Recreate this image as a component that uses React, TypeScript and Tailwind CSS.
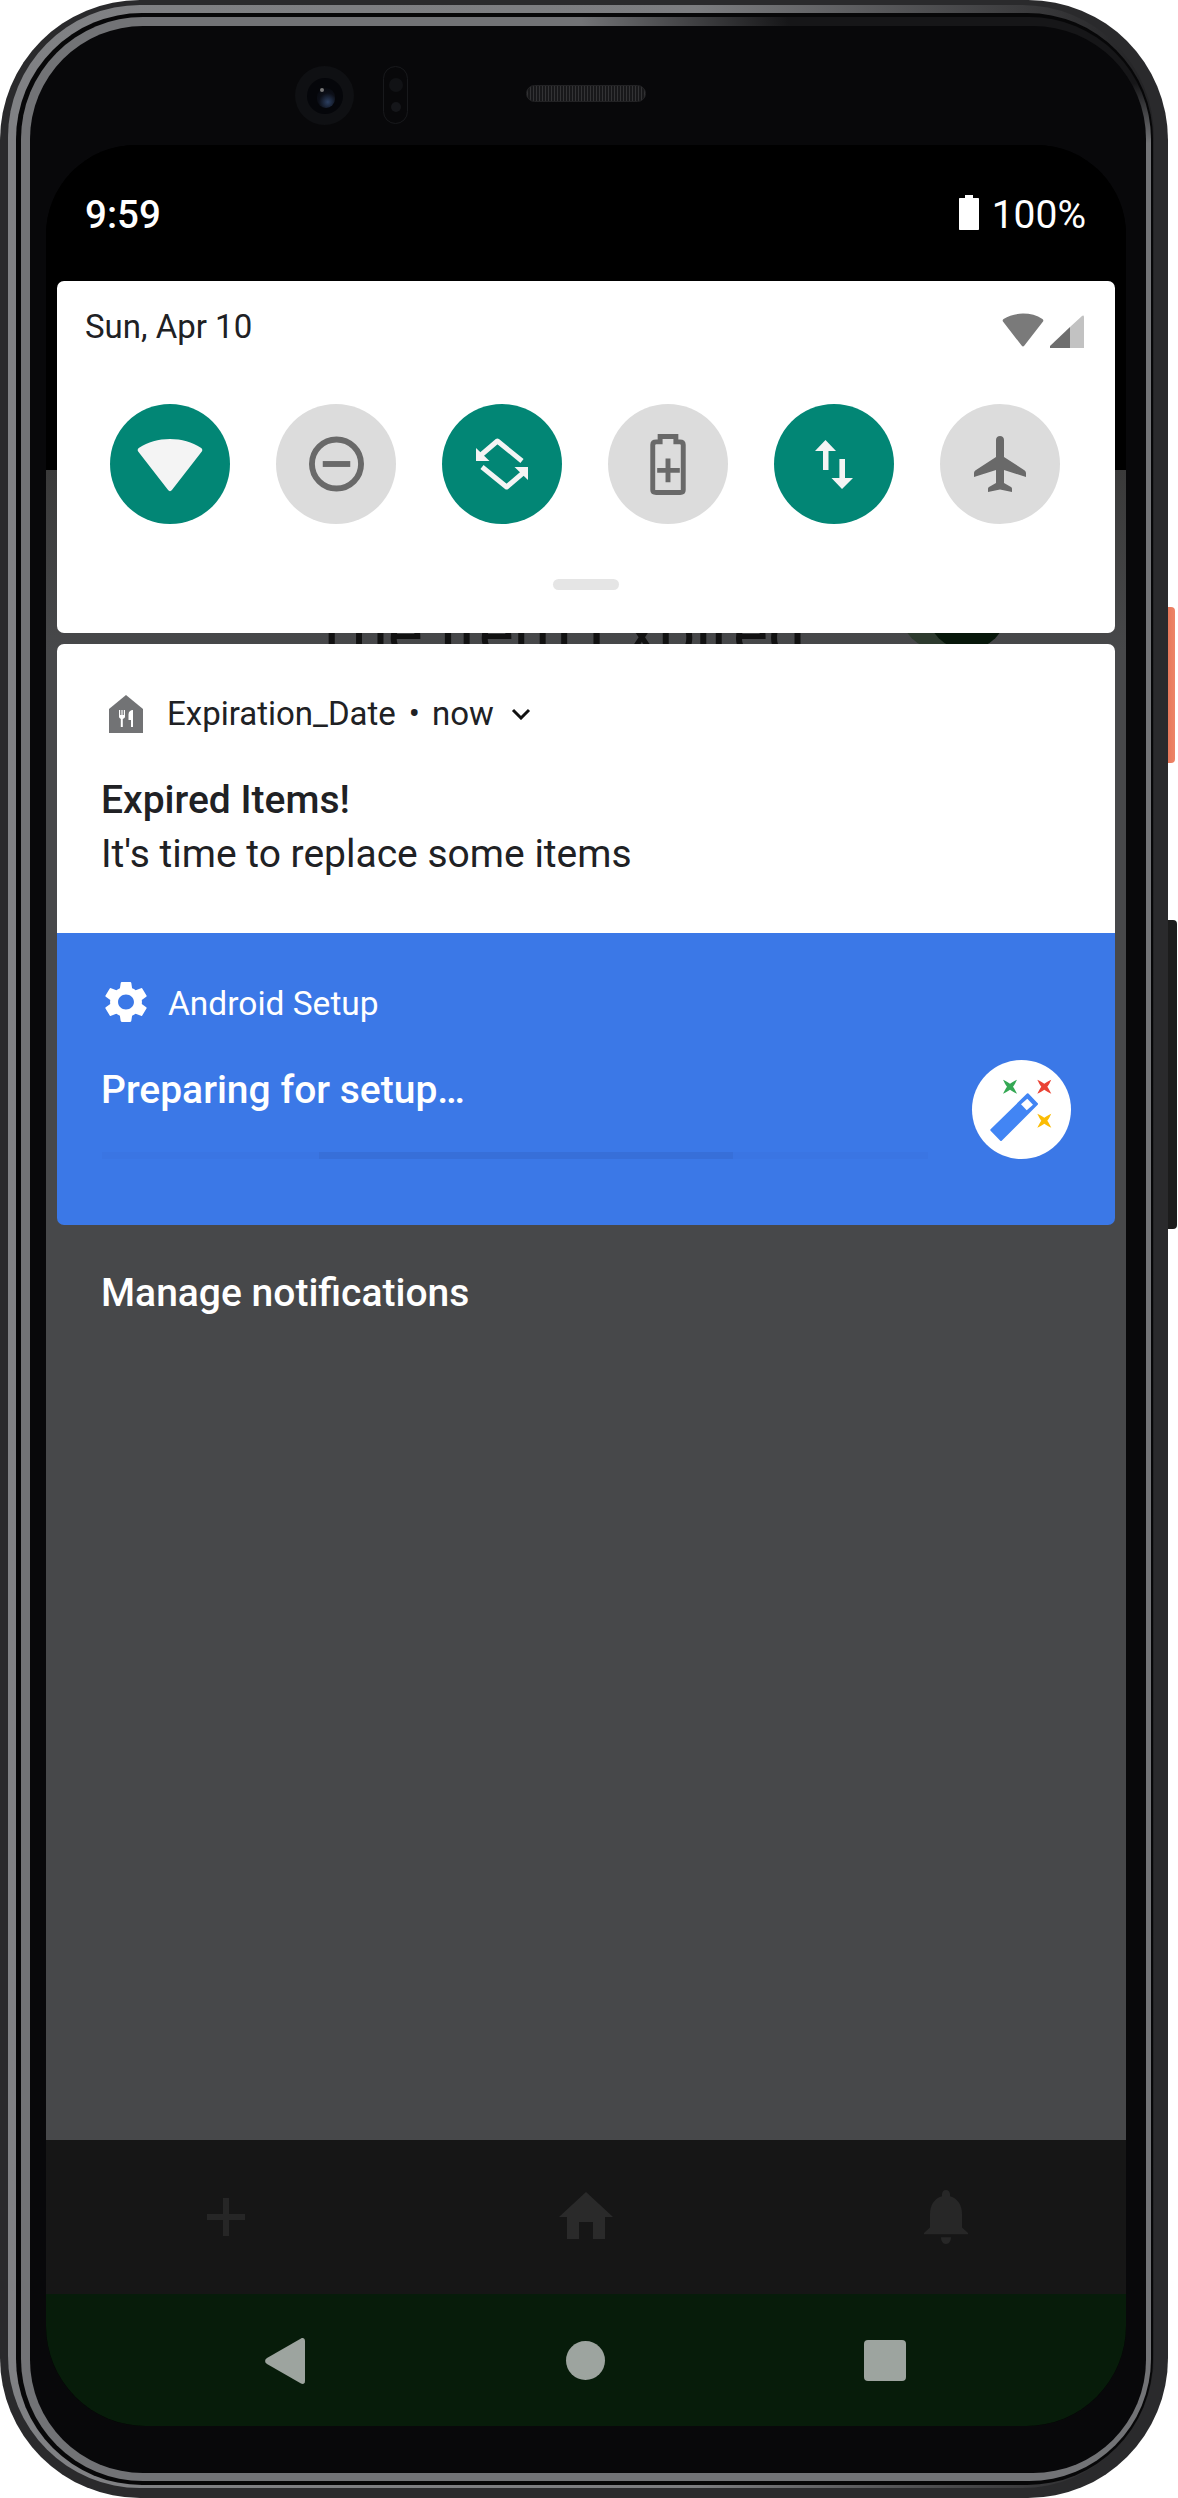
import React from "react";

const roboto = { fontFamily: "Roboto, 'Liberation Sans', sans-serif" };

// quick settings tile
function Tile({ on, children }: { on?: boolean; children: React.ReactNode }) {
  return (
    <div className={"w-[120px] h-[120px] rounded-full flex items-center justify-center shrink-0 " + (on ? "bg-[#028675]" : "bg-[#dcdcdc]")}>
      {children}
    </div>
  );
}

function WifiShape({ className, fill }: { className: string; fill: string }) {
  return (
    <svg className={className} viewBox="0 0 68 56" fill={fill}>
      <path d="M2 10C11 4 22 1 34 1s23 3 32 9c1.500 1 2 2.500 1 4L36 54c-1 1.500-3 1.500-4 0L1 14c-1-1.500-.5-3 1-4z" />
    </svg>
  );
}

function Spark({ x, y, color }: { x: number; y: number; color: string }) {
  return (
    <path
      transform={`translate(${x} ${y})`}
      fill={color}
      d="M-7-7C-4-5.500-2-4.500 0-3 2-4.500 4-5.500 7-7 5.500-4 4.500-2 3 0 4.500 2 5.500 4 7 7 4 5.500 2 4.500 0 3-2 4.500-4 5.500-7 7-5.500 4-4.500 2-3 0-4.500-2-5.500-4-7-7z"
    />
  );
}

function Phone() {
  return (
    <div className="relative w-[1178px] h-[2498px] bg-white overflow-hidden" style={roboto}>
      {/* side buttons */}
      <div className="absolute left-[1160px] top-[607px] w-[15px] h-[156px] rounded-r-[4px] bg-gradient-to-r from-[#e0694a] to-[#ee8468]" />
      <div className="absolute left-[1160px] top-[920px] w-[17px] h-[309px] rounded-r-[4px] bg-[#1c1c1c]" />

      {/* body shell */}
      <div className="relative w-[1168px] h-[2498px] rounded-[140px] bg-[#2a2a2c] pt-[5px] pl-[8px] pr-[14px] pb-[10px]">
        <div className="w-full h-full rounded-[132px] bg-[linear-gradient(90deg,#808184_0%,#7c7d80_60%,#38383a_90%,#222224_100%)] pt-[8px] pl-[8px] pr-[1px] pb-[3px]">
          <div className="w-full h-full rounded-[126px] bg-[#070708] pt-[4px] pl-[5px] pr-[2px] pb-[4px]">
            {/* inner chrome ring */}
            <div className="w-full h-full rounded-[122px] bg-[radial-gradient(ellipse_460px_130px_at_1020px_0px,#161618_0%,#161618_55%,transparent_100%),linear-gradient(#727376,#727376)] pt-[9px] pl-[9px] pr-[5px] pb-[8px]">
              <div className="w-full h-full rounded-[113px] bg-[#08080a] flex flex-col pl-[16px] pr-[20px]">
                {/* earpiece, camera */}
                <div className="h-[119px] shrink-0 flex items-start pt-[40px] pl-[249px]">
                  <div className="w-[59px] h-[59px] rounded-full bg-[#0f1013] flex items-center justify-center">
                    <div className="relative w-[36px] h-[36px] rounded-full bg-[#05060a]">
                      <div className="absolute left-[10px] top-[10px] w-[18px] h-[20px] rounded-full bg-[radial-gradient(circle_at_60%_70%,#2c3f60_0%,#0c0f18_50%,#05060a_100%)]" />
                      <div className="absolute left-[13px] top-[10px] w-[4px] h-[4px] rounded-full bg-[#777]" />
                    </div>
                  </div>
                  <div className="ml-[29px] w-[25px] h-[58px] rounded-full border border-[#18191c] flex flex-col items-center justify-around py-[6px]">
                    <div className="w-[14px] h-[14px] rounded-full bg-[#111215]" />
                    <div className="w-[10px] h-[10px] rounded-full bg-[#15161a]" />
                  </div>
                  <div className="ml-[118px] mt-[19px] w-[120px] h-[17px] rounded-full border border-[#222224] bg-[repeating-linear-gradient(90deg,#333335_0px,#333335_1px,#18181a_1px,#18181a_3px)]" />
                </div>

                {/* screen */}
                <div className="relative w-[1080px] h-[2281px] rounded-t-[90px] rounded-b-[100px] overflow-hidden bg-black flex flex-col shrink-0">
                  <div className="h-[325px] shrink-0 bg-black" />
                  <div className="flex-1 bg-[linear-gradient(180deg,#3a3a3a_0px,#47484a_180px)] relative overflow-hidden">
                    {/* app behind the shade, only a sliver shows */}
                    <div className="absolute left-[266px] top-[163px] w-[530px] h-[11px] overflow-hidden">
                      <div className="mt-[-6px] text-[66px] leading-[11px] text-[#111] whitespace-nowrap">The Item Expired</div>
                    </div>
                    <div className="absolute left-[854px] top-[100px] w-[80px] h-[80px] rounded-full bg-[#2d3a2e]" />
                    <div className="absolute left-[881px] top-[100px] w-[80px] h-[80px] rounded-full bg-[#07170a]" />
                  </div>
                  <div className="h-[154px] shrink-0 bg-[#161616] flex items-center">
                    <div className="w-[360px] flex justify-center">
                      <svg className="w-[38px] h-[38px]" viewBox="0 0 38 38" fill="#262626">
                        <path d="M16 0h6v16h16v6H22v16h-6V22H0v-6h16z" />
                      </svg>
                    </div>
                    <div className="w-[360px] flex justify-center">
                      <svg className="w-[54px] h-[47px] mb-[3px]" viewBox="0 0 54 47" fill="#2a2a2a">
                        <path d="M27 0l27 25h-8v22H34V30H20v17H8V25H0z" />
                      </svg>
                    </div>
                    <div className="w-[360px] flex justify-center">
                      <svg className="w-[44px] h-[54px]" viewBox="0 0 44 56" preserveAspectRatio="none" fill="#272727">
                        <path d="M22 0c2.500 0 4 2 4 4.500v2C34 9 38 16 38 25v14l6 5.500V46H0v-1.500L6 39V25C6 16 10 9 18 6.500v-2C18 2 19.500 0 22 0zM17 49h10c0 4-2 7-5 7s-5-3-5-7z" />
                      </svg>
                    </div>
                  </div>
                  <div className="h-[132px] shrink-0 bg-[#071c0a] flex items-start pt-[44px] pl-[89px]">
                    <div className="w-[300px] flex justify-center">
                      <svg className="w-[40px] h-[46px]" viewBox="0 0 40 46" fill="#9da49f">
                        <path d="M36 .5c2-1 4 0 4 2.500v40c0 2.500-2 3.500-4 2.500L2 26c-2.500-1.500-2.500-4.500 0-6z" />
                      </svg>
                    </div>
                    <div className="w-[300px] flex justify-center">
                      <div className="w-[39px] h-[39px] mt-[3px] rounded-full bg-[#9da49f]" />
                    </div>
                    <div className="w-[300px] flex justify-center">
                      <div className="w-[42px] h-[41px] mt-[2px] rounded-[4px] bg-[#9da49f]" />
                    </div>
                  </div>

                  {/* notification shade */}
                  <div className="absolute inset-0 flex flex-col px-[11px]">
                    <div className="h-[136px] shrink-0 flex items-start justify-between pt-[48px] pl-[28px] pr-[29px] text-white">
                      <span className="text-[38.5px] leading-[44px] font-medium">9:59</span>
                      <div className="flex items-start">
                        <svg className="w-[20px] h-[35px] mt-[2px]" viewBox="0 0 20 35" fill="#fff">
                          <path d="M6 0h8v3h5c.6 0 1 .4 1 1v30c0 .6-.4 1-1 1H1c-.6 0-1-.4-1-1V4c0-.6.4-1 1-1h5z" />
                        </svg>
                        <span className="ml-[13px] text-[39px] leading-[44px]">100%</span>
                      </div>
                    </div>

                    {/* quick settings */}
                    <div className="h-[352px] shrink-0 rounded-[7px] bg-white flex flex-col">
                      <div className="flex items-start justify-between pl-[28px] pr-[31px] pt-[26px]">
                        <span className="text-[33px] leading-[40px] text-[#202124]">Sun, Apr 10</span>
                        <div className="flex items-start mt-[6px]">
                          <WifiShape className="w-[42px] h-[34px]" fill="#7a7a7a" />
                          <svg className="w-[34px] h-[33px] ml-[6px] mt-[2px]" viewBox="0 0 34 33">
                            <path fill="#6e6e6e" d="M20 12L0 31v2h20z" />
                            <path fill="#c2c2c2" d="M20 12L32 1c1-1 2-.5 2 1v31H20z" />
                          </svg>
                        </div>
                      </div>
                      <div className="flex gap-[46px] pl-[53px] mt-[56px]">
                        <Tile on>
                          <WifiShape className="w-[68px] h-[54px] mt-[2px]" fill="#f4f4f4" />
                        </Tile>
                        <Tile>
                          <svg className="w-[55px] h-[56px]" viewBox="0 0 56 56" fill="none">
                            <circle cx="28" cy="28" r="25" stroke="#696969" strokeWidth="6" />
                            <rect x="14" y="25" width="28" height="6" fill="#696969" />
                          </svg>
                        </Tile>
                        <Tile on>
                          <svg className="w-[52px] h-[52px]" viewBox="0 0 52 52" fill="none">
                            <path d="M5 17L21.400 3 46 23" stroke="#f4f4f4" strokeWidth="5" strokeLinejoin="round" />
                            <path d="M47 35L30.600 49 6 29" stroke="#f4f4f4" strokeWidth="5" strokeLinejoin="round" />
                            <path d="M0 23h13.500L0 10z" fill="#f4f4f4" />
                            <path d="M52 29H38.500L52 42z" fill="#f4f4f4" />
                          </svg>
                        </Tile>
                        <Tile>
                          <svg className="w-[36px] h-[61px]" viewBox="0 0 36 62" fill="none">
                            <path stroke="#696969" strokeWidth="5" d="M10 8V2.500h16V8h4c2 0 3.500 1 3.500 3v46c0 2-1 2.500-3 2.500H6c-2 0-3.500-.5-3.500-2.500V11c0-2 1.500-3 3.500-3z" />
                            <path fill="#696969" d="M15.500 25h5v9.500H30v5h-9.500V49h-5v-9.500H7v-5h8.500z" />
                          </svg>
                        </Tile>
                        <Tile on>
                          <svg className="w-[38px] h-[49px]" viewBox="0 0 38 49" fill="#f4f4f4">
                            <path d="M10.500 0L21 11h-7.500v19H8V11H0zM24.400 19H30v19h8L27 49 16.500 38h7.900z" />
                          </svg>
                        </Tile>
                        <Tile>
                          <svg className="w-[52px] h-[56px]" viewBox="0 0 52 56" fill="#696969">
                            <path d="M22 4c0-2.500 1.800-4 4-4s4 1.500 4 4v17l20 13c1.500 1 2 2 2 3.500V41L30 34v13l7 4c.7.5 1 1 1 1.800V56l-12-2.500L14 56v-3.200c0-.8.300-1.300 1-1.800l7-4V34L0 41v-3.500C0 36 .5 35 2 34l20-13z" />
                          </svg>
                        </Tile>
                      </div>
                      <div className="mx-auto mt-[55px] w-[66px] h-[11px] rounded-full bg-[#e5e5e5]" />
                    </div>

                    {/* notification cards */}
                    <div className="mt-[11px] h-[581px] shrink-0 rounded-[7px] overflow-hidden flex flex-col">
                      <div className="h-[289px] shrink-0 bg-white pt-[47px] pl-[44px] text-[#202124]">
                        <div className="flex items-center h-[46px] pl-[8px]">
                          <svg className="w-[34px] h-[38px]" viewBox="0 0 34 38" fill="#727375">
                            <path d="M17 0l17 14v24H0V14z" />
                            <path fill="#fff" d="M10 15h1.200v5h1.200v-5h1.200v5h1.200v-5h1.200v6.500c0 1.300-1 2.200-2.200 2.400V32h-2v-8.100C11 23.700 10 22.800 10 21.500zM24 15v17h-2v-7h-2.500v-5.500c0-2.800 2-4.500 4.500-4.500z" />
                          </svg>
                          <span className="ml-[24px] text-[33px] leading-[46px]">Expiration_Date</span>
                          <span className="ml-[13px] text-[33px] leading-[46px]">•</span>
                          <span className="ml-[12px] text-[33px] leading-[46px]">now</span>
                          <svg className="w-[20px] h-[12px] ml-[17px]" viewBox="0 0 20 12" fill="none">
                            <path d="M2 2l8 8 8-8" stroke="#111" strokeWidth="3" />
                          </svg>
                        </div>
                        <div className="mt-[36px] text-[39px] leading-[54px] font-medium">Expired Items!</div>
                        <div className="text-[39px] leading-[54px]">It's time to replace some items</div>
                      </div>
                      <div className="flex-1 bg-[#3b78e7] relative pl-[44px] text-white">
                        <div className="flex items-center h-[46px] mt-[46px] pl-[4px]">
                          <svg className="w-[42px] h-[42px]" viewBox="2.500 1.900 19 20.200" preserveAspectRatio="none" fill="#fff">
                            <path d="M19.140 12.940c.040-.300.060-.610.060-.940 0-.320-.020-.640-.070-.940l2.030-1.580c.180-.140.230-.410.120-.610l-1.920-3.320c-.120-.220-.370-.290-.590-.220l-2.390.960c-.500-.380-1.030-.700-1.620-.940l-.360-2.540c-.040-.240-.240-.410-.480-.410h-3.840c-.240 0-.430.170-.470.410l-.360 2.540c-.590.240-1.130.570-1.620.940l-2.390-.960c-.220-.080-.470 0-.590.220L2.740 8.870c-.120.210-.080.470.120.610l2.030 1.580c-.050.300-.090.630-.090.940s.020.640.070.940l-2.030 1.580c-.180.140-.230.410-.120.610l1.920 3.320c.120.220.370.290.590.220l2.390-.960c.500.380 1.030.700 1.620.940l.360 2.540c.050.240.240.410.480.410h3.840c.240 0 .440-.170.470-.410l.360-2.540c.590-.240 1.130-.560 1.620-.940l2.390.960c.220.080.470 0 .590-.220l1.920-3.320c.120-.220.070-.470-.120-.610l-2.010-1.580zM12 15.600c-1.980 0-3.600-1.620-3.600-3.600s1.620-3.600 3.600-3.600 3.600 1.620 3.600 3.600-1.620 3.600-3.600 3.600z" />
                          </svg>
                          <span className="ml-[21px] mt-[3px] text-[33.500px] leading-[46px]">Android Setup</span>
                        </div>
                        <div className="mt-[38px] text-[39px] leading-[54px] font-medium">Preparing for setup…</div>
                        <div className="mt-[35px] ml-[1px] mr-[187px] h-[7px] bg-[#3a75e3] pl-[217px] pr-[195px]">
                          <div className="h-full bg-[#376fd9]" />
                        </div>
                        {/* setup wand badge */}
                        <div className="absolute right-[44px] top-[127px] w-[99px] h-[99px] rounded-full bg-white">
                          <svg className="w-[99px] h-[99px]" viewBox="0 0 99 99">
                            <Spark x={38} y={26.700} color="#34a853" />
                            <Spark x={72.300} y={26.700} color="#ea4335" />
                            <Spark x={72.300} y={60.700} color="#fbbc04" />
                            <path d="M55.700 34.300L65 44 29 80 19.300 70z" fill="#4285f4" stroke="#4285f4" strokeWidth="2" strokeLinejoin="round" />
                            <path d="M55.300 38.700L61 44.700 54.700 50.300 49 44.300z" fill="#fff" />
                          </svg>
                        </div>
                      </div>
                    </div>

                    <div className="mt-[41px] pl-[44px] text-[39px] leading-[54px] font-medium text-white">Manage notifications</div>
                  </div>
                </div>
              </div>
            </div>
          </div>
        </div>
      </div>
    </div>
  );
}

export default function App() {
  return <Phone />;
}
